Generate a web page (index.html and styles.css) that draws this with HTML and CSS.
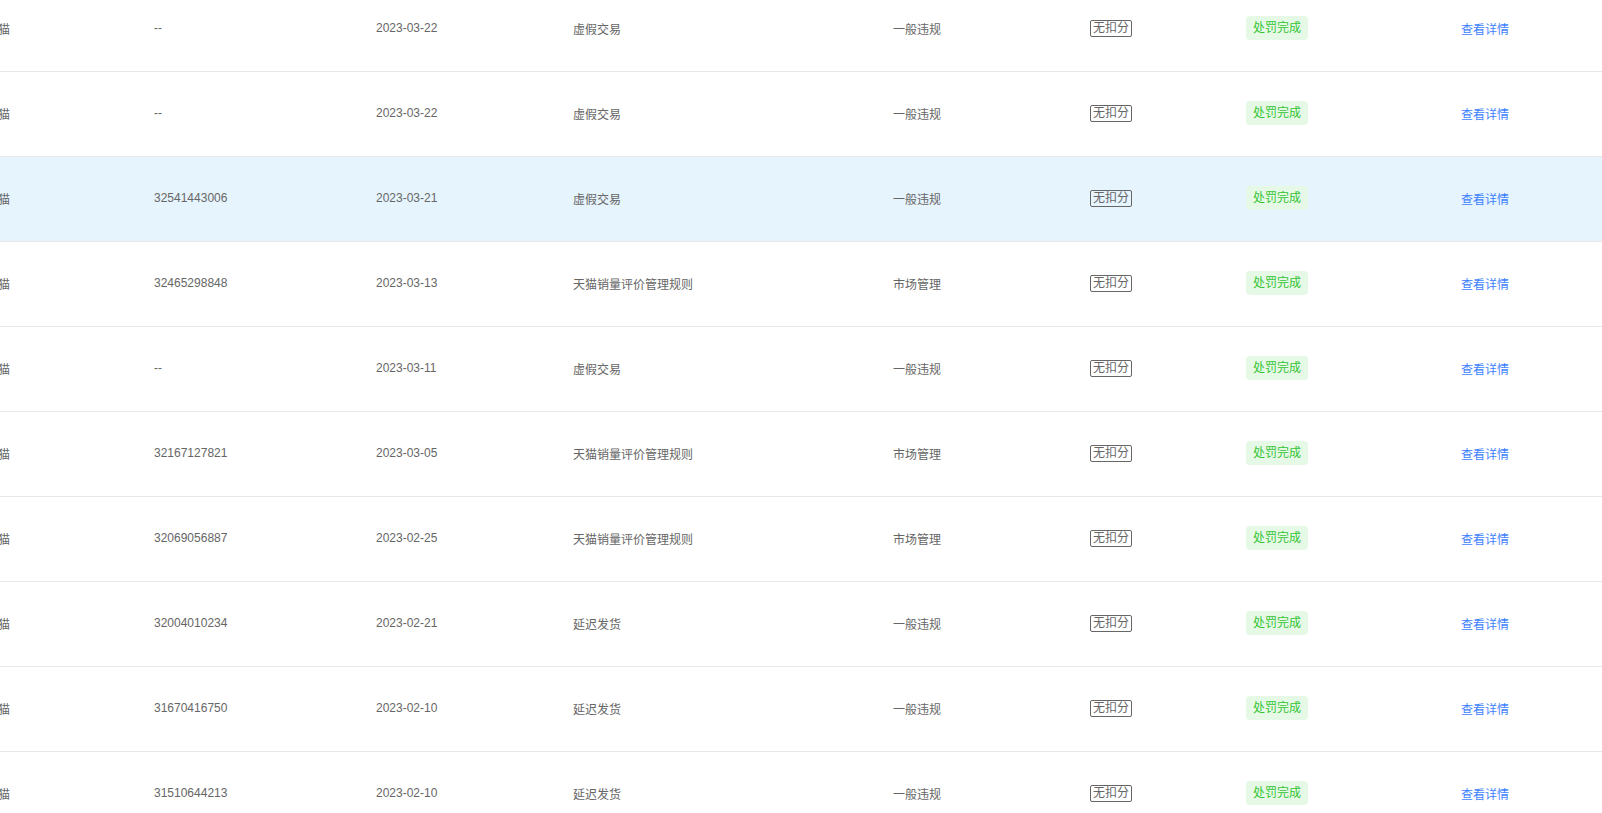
FILE: index.html
```html
<!DOCTYPE html>
<html lang="zh-CN">
<head>
    <meta charset="UTF-8">
    <meta name="viewport" content="width=device-width, initial-scale=1.0">
    <title>违规记录</title>
    <link rel="stylesheet" href="styles.css">
</head>
<body>
    <div class="table-wrap">
        <div class="table">
            <div class="row">
                <div class="cell">天猫</div>
                <div class="cell">--</div>
                <div class="cell">2023-03-22</div>
                <div class="cell">虚假交易</div>
                <div class="cell">一般违规</div>
                <div class="cell"><span class="tag">无扣分</span></div>
                <div class="cell"><span class="status">处罚完成</span></div>
                <div class="cell"><a class="link" href="#">查看详情</a></div>
            </div>
            <div class="row">
                <div class="cell">天猫</div>
                <div class="cell">--</div>
                <div class="cell">2023-03-22</div>
                <div class="cell">虚假交易</div>
                <div class="cell">一般违规</div>
                <div class="cell"><span class="tag">无扣分</span></div>
                <div class="cell"><span class="status">处罚完成</span></div>
                <div class="cell"><a class="link" href="#">查看详情</a></div>
            </div>
            <div class="row active">
                <div class="cell">天猫</div>
                <div class="cell">32541443006</div>
                <div class="cell">2023-03-21</div>
                <div class="cell">虚假交易</div>
                <div class="cell">一般违规</div>
                <div class="cell"><span class="tag">无扣分</span></div>
                <div class="cell"><span class="status">处罚完成</span></div>
                <div class="cell"><a class="link" href="#">查看详情</a></div>
            </div>
            <div class="row">
                <div class="cell">天猫</div>
                <div class="cell">32465298848</div>
                <div class="cell">2023-03-13</div>
                <div class="cell">天猫销量评价管理规则</div>
                <div class="cell">市场管理</div>
                <div class="cell"><span class="tag">无扣分</span></div>
                <div class="cell"><span class="status">处罚完成</span></div>
                <div class="cell"><a class="link" href="#">查看详情</a></div>
            </div>
            <div class="row">
                <div class="cell">天猫</div>
                <div class="cell">--</div>
                <div class="cell">2023-03-11</div>
                <div class="cell">虚假交易</div>
                <div class="cell">一般违规</div>
                <div class="cell"><span class="tag">无扣分</span></div>
                <div class="cell"><span class="status">处罚完成</span></div>
                <div class="cell"><a class="link" href="#">查看详情</a></div>
            </div>
            <div class="row">
                <div class="cell">天猫</div>
                <div class="cell">32167127821</div>
                <div class="cell">2023-03-05</div>
                <div class="cell">天猫销量评价管理规则</div>
                <div class="cell">市场管理</div>
                <div class="cell"><span class="tag">无扣分</span></div>
                <div class="cell"><span class="status">处罚完成</span></div>
                <div class="cell"><a class="link" href="#">查看详情</a></div>
            </div>
            <div class="row">
                <div class="cell">天猫</div>
                <div class="cell">32069056887</div>
                <div class="cell">2023-02-25</div>
                <div class="cell">天猫销量评价管理规则</div>
                <div class="cell">市场管理</div>
                <div class="cell"><span class="tag">无扣分</span></div>
                <div class="cell"><span class="status">处罚完成</span></div>
                <div class="cell"><a class="link" href="#">查看详情</a></div>
            </div>
            <div class="row">
                <div class="cell">天猫</div>
                <div class="cell">32004010234</div>
                <div class="cell">2023-02-21</div>
                <div class="cell">延迟发货</div>
                <div class="cell">一般违规</div>
                <div class="cell"><span class="tag">无扣分</span></div>
                <div class="cell"><span class="status">处罚完成</span></div>
                <div class="cell"><a class="link" href="#">查看详情</a></div>
            </div>
            <div class="row">
                <div class="cell">天猫</div>
                <div class="cell">31670416750</div>
                <div class="cell">2023-02-10</div>
                <div class="cell">延迟发货</div>
                <div class="cell">一般违规</div>
                <div class="cell"><span class="tag">无扣分</span></div>
                <div class="cell"><span class="status">处罚完成</span></div>
                <div class="cell"><a class="link" href="#">查看详情</a></div>
            </div>
            <div class="row">
                <div class="cell">天猫</div>
                <div class="cell">31510644213</div>
                <div class="cell">2023-02-10</div>
                <div class="cell">延迟发货</div>
                <div class="cell">一般违规</div>
                <div class="cell"><span class="tag">无扣分</span></div>
                <div class="cell"><span class="status">处罚完成</span></div>
                <div class="cell"><a class="link" href="#">查看详情</a></div>
            </div>
        </div>
    </div>
</body>
</html>
```

FILE: styles.css
```css
/* General Styling */
body {
    margin: 0;
    padding: 0;
    overflow: hidden;
    background: #fff;
    font-family: Arial, "Liberation Sans", "Noto Sans CJK SC", sans-serif;
    font-size: 12px;
    color: #666;
}

/* table is scrolled: part of the first row and first column are out of view */
.table-wrap {
    height: 100vh;
    overflow: hidden;
}

.table {
    margin-top: -13px;
    margin-left: -30px;
}

.row {
    display: grid;
    grid-template-columns: 168px 222px 197px 320px 197px 156px 215px 1fr;
    height: 84px;
    border-bottom: 1px solid #e8e8e8;
}

.row.active {
    background: #e6f4fe;
}

.cell {
    display: flex;
    align-items: center;
    padding: 0 16px 2px;
    white-space: nowrap;
}

.cell:first-child {
    justify-content: flex-end;
    padding-right: 128px;
}

.tag {
    display: inline-block;
    padding: 0 2px;
    line-height: 15px;
    border: 1px solid #666;
    border-radius: 2px;
    color: #666;
}

.status {
    display: inline-block;
    padding: 0 7px;
    height: 24px;
    line-height: 24px;
    border-radius: 4px;
    background: #e6f9e6;
    color: #33c433;
}

.link {
    color: #3d7ffe;
    text-decoration: none;
}
```
